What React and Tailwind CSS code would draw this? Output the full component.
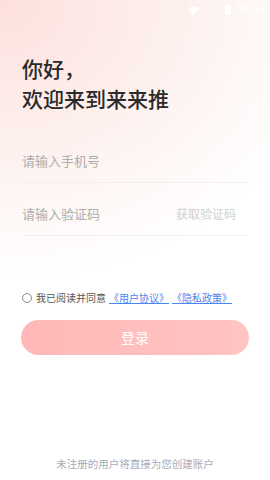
import React from "react";

export default function App() {
  return (
    <div
      className="relative w-[270px] h-[480px] overflow-hidden bg-white"
      style={{ fontFamily: '"Noto Sans CJK SC", "Noto Sans", sans-serif' }}
    >
      <div className="absolute inset-0 bg-[radial-gradient(ellipse_340px_280px_at_0%_0%,#fde0dd_0%,#fdf0ed_50%,#ffffff_100%)]" />
      <div className="relative flex flex-col h-full">
        {/* status bar */}
        <div className="h-[20px] flex items-center justify-end pr-[6px] gap-[6px] text-white text-[11px]">
          <svg width="11" height="9" viewBox="0 0 11 9"><path d="M0 2.5 Q5.5 -1.5 11 2.5 L5.5 9 Z" fill="#fff" /></svg>
          <div className="w-[14px]" />
          <div className="w-[6px] h-[10px] rounded-[1px] bg-white" />
          <span style={{ fontFamily: '"Roboto", sans-serif' }}>14:06</span>
        </div>

        <div className="px-[22px] pt-[33px]">
          <div className="text-[21px] leading-[30px] font-medium text-[#2a2a2a]">你好，</div>
          <div className="text-[21px] leading-[30px] font-medium text-[#2a2a2a]">欢迎来到来来推</div>
        </div>

        <div className="px-[22px] mt-[17px]">
          <div className="pt-[21px] pb-[11px] leading-[20px] flex items-center border-b border-[#f0f0f0] text-[13px] text-[#adadad]">
            请输入手机号
          </div>
          <div className="pt-[21px] pb-[11px] leading-[20px] flex items-center justify-between border-b border-[#f0f0f0] text-[13px] text-[#adadad]">
            <span>请输入验证码</span>
            <span className="text-[12px] text-[#cfcfcf] mr-[12px]">获取验证码</span>
          </div>
        </div>

        <div className="px-[22px] mt-[55px] flex items-center text-[10px] leading-[14px] text-[#555555]">
          <span className="w-[10px] h-[10px] rounded-full border border-[#888888] mr-[4px]" />
          <span>我已阅读并同意</span>
          <span className="text-[#4a86f0] underline ml-[3px]">《用户协议》</span>
          <span className="text-[#4a86f0] underline ml-[3px]">《隐私政策》</span>
        </div>

        <div className="px-[21px] mt-[15px]">
          <div className="h-[35px] rounded-full bg-[linear-gradient(90deg,#ffb8b7,#ffc4c3)] flex items-center justify-center text-white text-[14px]">
            登录
          </div>
        </div>

        <div className="mt-auto mb-[8px] text-center text-[10.5px] text-[#a8aab8]">
          未注册的用户将直接为您创建账户
        </div>
      </div>
    </div>
  );
}
